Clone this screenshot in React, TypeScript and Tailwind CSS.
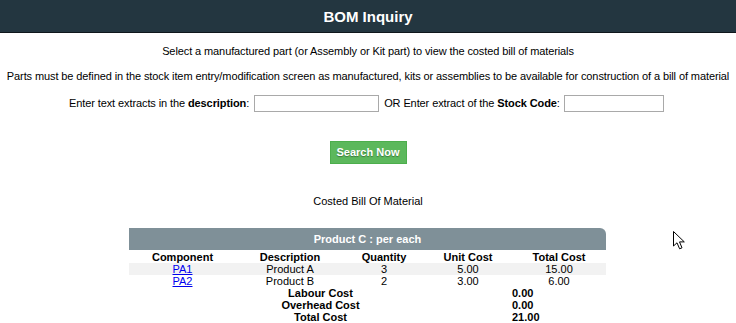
const rows = [
  { code: 'PA1', desc: 'Product A', qty: '3', unit: '5.00', total: '15.00' },
  { code: 'PA2', desc: 'Product B', qty: '2', unit: '3.00', total: '6.00' },
];

const totals = [
  { label: 'Labour Cost', value: '0.00' },
  { label: 'Overhead Cost', value: '0.00' },
  { label: 'Total Cost', value: '21.00' },
];

const cols = 'grid grid-cols-[107px_108px_80px_88px_94px]';

const Cursor = () => (
  <svg
    className="absolute left-[673px] top-[231px]"
    width="13"
    height="19"
    viewBox="0 0 13 19"
  >
    <path
      d="M0.5 0.5 L0.5 15 L4 11.8 L6.6 17.8 L9 16.8 L6.5 10.9 L11.3 10.9 Z"
      fill="#fff"
      stroke="#000"
      strokeWidth="1"
      strokeLinejoin="miter"
    />
  </svg>
);

const App = () => {
  return (
    <div className="relative w-[736px] h-[323px] overflow-hidden bg-white font-['Liberation_Sans',Arial,sans-serif] text-black">
      <header className="h-[33px] bg-[#233640] border-b border-[#0f171c] flex items-center justify-center">
        <h1 className="text-[15px] font-bold text-white leading-none">BOM Inquiry</h1>
      </header>

      <p className="mt-[11px] text-center text-[11px] leading-[14px] tracking-[-0.1px]">
        Select a manufactured part (or Assembly or Kit part) to view the costed bill of materials
      </p>
      <p className="mt-[11px] text-center text-[11px] leading-[14px] tracking-[-0.1px] whitespace-nowrap">
        Parts must be defined in the stock item entry/modification screen as manufactured, kits or
        assemblies to be available for construction of a bill of material
      </p>

      <div className="mt-[12px] ml-[69px] flex items-center text-[11px] tracking-[-0.1px]">
        <span>
          Enter text extracts in the <b>description</b>:
        </span>
        <input className="ml-[5px] w-[125px] h-[17px] border border-[#a9a9a9] bg-white" />
        <span className="ml-[5px]">
          OR Enter extract of the <b>Stock Code</b>:
        </span>
        <input className="ml-[4px] w-[100px] h-[17px] border border-[#a9a9a9] bg-white" />
      </div>

      <div className="mt-[29px] flex justify-center">
        <button className="w-[77px] h-[23px] bg-[#5cb85c] border border-[#4cae4c] text-white text-[11px] font-bold [text-shadow:0_1px_1px_rgba(0,0,0,0.35)]">
          Search Now
        </button>
      </div>

      <p className="mt-[30px] text-center text-[11px] leading-[14px]">Costed Bill Of Material</p>

      <div className="mt-[20px] ml-[129px] w-[477px] text-[11px] leading-[12px]">
        <div className="h-[22px] bg-[#7f9098] rounded-tr-[6px] flex items-center justify-center text-white font-bold">
          Product C : per each
        </div>
        <div className={`${cols} font-bold text-center pt-[1px]`}>
          <span>Component</span>
          <span>Description</span>
          <span>Quantity</span>
          <span>Unit Cost</span>
          <span>Total Cost</span>
        </div>
        {rows.map((r, i) => (
          <div key={r.code} className={`${cols} text-center ${i === 0 ? 'bg-[#f2f2f2]' : ''}`}>
            <a href="#" className="text-[#0000ee] underline">
              <span>{r.code}</span>
            </a>
            <span>{r.desc}</span>
            <span>{r.qty}</span>
            <span>{r.unit}</span>
            <span>{r.total}</span>
          </div>
        ))}
        {totals.map((t) => (
          <div key={t.label} className="grid grid-cols-[383px_94px] font-bold">
            <span className="text-center">{t.label}</span>
            <span>{t.value}</span>
          </div>
        ))}
      </div>

      <Cursor />
    </div>
  );
};

export default App;
